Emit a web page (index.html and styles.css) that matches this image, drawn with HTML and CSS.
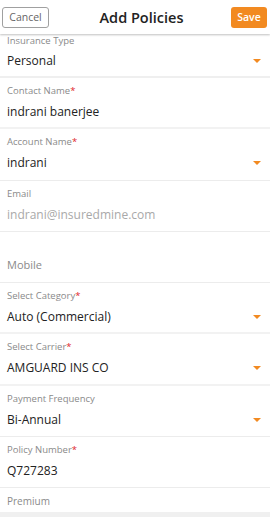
FILE: index.html
```html
<!DOCTYPE html>
<html>
<head>
  <title>Add Policies</title>
  <link rel="stylesheet" href="styles.css">
</head>
<body>
  <div class="topbar">
    <button class="btn-cancel">Cancel</button>
    <h1>Add Policies</h1>
    <button class="btn-save">Save</button>
  </div>

  <div class="form">
    <div class="field first">
      <label>Insurance Type</label>
      <div class="value select">Personal<span class="caret"></span></div>
    </div>
    <div class="field thick">
      <label>Contact Name<span class="req">*</span></label>
      <div class="value">indrani banerjee</div>
    </div>
    <div class="field">
      <label>Account Name<span class="req">*</span></label>
      <div class="value select">indrani<span class="caret"></span></div>
    </div>
    <div class="field">
      <label>Email</label>
      <div class="value muted">indrani@insuredmine.com</div>
    </div>
    <div class="field empty">
      <label>Mobile</label>
    </div>
    <div class="field thick">
      <label>Select Category<span class="req">*</span></label>
      <div class="value select">Auto (Commercial)<span class="caret"></span></div>
    </div>
    <div class="field thick">
      <label>Select Carrier<span class="req">*</span></label>
      <div class="value select">AMGUARD INS CO<span class="caret"></span></div>
    </div>
    <div class="field">
      <label>Payment Frequency</label>
      <div class="value select">Bi-Annual<span class="caret"></span></div>
    </div>
    <div class="field">
      <label>Policy Number<span class="req">*</span></label>
      <div class="value">Q727283</div>
    </div>
    <div class="field last">
      <label>Premium</label>
    </div>
  </div>
</body>
</html>
```

FILE: styles.css
```css
body {
  margin: 0;
  font-family: "Open Sans", "Noto Sans", sans-serif;
  background-color: #fff;
  color: #222;
  height: 517px;
  overflow: hidden;
}

.topbar {
  position: relative;
  z-index: 1;
  height: 34px;
  display: flex;
  align-items: center;
  justify-content: space-between;
  padding: 0 3px 0 2px;
  background-color: #fff;
  box-shadow: 0 1px 2px rgba(0, 0, 0, 0.25);
}

.topbar h1 {
  margin: 0;
  font-size: 14.5px;
  font-weight: 600;
  color: #222;
  padding-left: 3px;
}

.btn-cancel,
.btn-save {
  font-family: inherit;
  height: 21px;
  border-radius: 3px;
  font-size: 10.5px;
  line-height: 19px;
  padding: 0;
  cursor: pointer;
}

.btn-cancel {
  width: 47px;
  background-color: #fff;
  border: 1px solid #a0a0a0;
  color: #666;
}

.btn-save {
  width: 36px;
  background-color: #f28a21;
  border: none;
  color: #fff;
  font-weight: 600;
}

.form {
  display: flex;
  flex-direction: column;
}

.field {
  height: 51.25px;
  flex-shrink: 0;
  padding: 6px 7px 0;
  box-sizing: border-box;
  border-bottom: 1px solid #ececec;
}

.field.first {
  height: 44px;
  padding-top: 0;
  border-bottom: 2px solid #efefef;
}

.field.first .value {
  margin-top: 5px;
}

.field.thick {
  border-bottom: 2px solid #f2f2f2;
}

.field label {
  display: block;
  font-size: 9.5px;
  line-height: 14px;
  color: #8a8a8a;
}

.req {
  color: #e0262b;
}

.value {
  display: flex;
  align-items: center;
  justify-content: space-between;
  margin-top: 6px;
  font-size: 12px;
  line-height: 16px;
  color: #222;
}

.value.muted {
  color: #a9a9a9;
}

.caret {
  width: 0;
  height: 0;
  margin-right: 2px;
  border-left: 4px solid transparent;
  border-right: 4px solid transparent;
  border-top: 4px solid #f28a21;
}

.field.empty label {
  margin-top: 19px;
  font-size: 11px;
  line-height: 16px;
}

.field.last {
  height: 24px;
  border-bottom: none;
  padding-top: 6px;
}

.field.last label {
  font-size: 10px;
}

.form::after {
  content: "";
  display: block;
  height: 20px;
  background-color: #f0f0f0;
}
```
